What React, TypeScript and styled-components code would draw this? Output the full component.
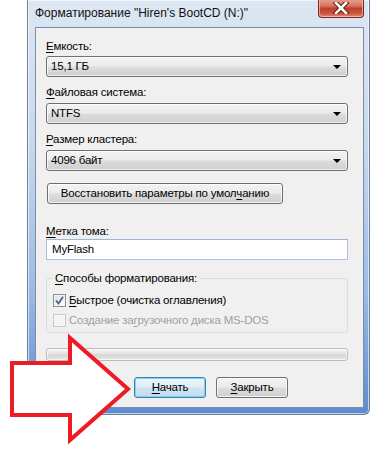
import React from 'react';
import styled, {createGlobalStyle, css} from 'styled-components';

const GlobalStyle = createGlobalStyle`
  body {
    margin: 0;
    background: #fff;
    font-family: "Liberation Sans", Arial, sans-serif;
  }
`;

const Stage = styled.div`
  position: relative;
  width: 374px;
  height: 454px;
  overflow: hidden;
  background: #fff;
`;

const Window = styled.div`
  margin-left: 27px;
  width: 343px;
  height: 415px;
  box-sizing: border-box;
  padding: 0 5px 0 7px;
  border: 1px solid #6f7f96;
  border-top: none;
  border-radius: 0 0 6px 6px;
  background: linear-gradient(
    180deg,
    #dde7f3 0%,
    #c7d8ee 35%,
    #9cbbe6 70%,
    #5d8bd0 100%
  );
  box-shadow: inset 0 0 0 1px rgba(255, 255, 255, 0.6);
  display: flex;
  flex-direction: column;
`;

const TitleBar = styled.div`
  height: 27px;
  display: flex;
  align-items: flex-start;
`;

const Title = styled.div`
  padding-top: 6px;
  font-size: 12px;
  line-height: 15px;
  color: #111;
  white-space: nowrap;
`;

const CloseButton = styled.div`
  margin-left: auto;
  margin-top: -2px;
  width: 46px;
  height: 20px;
  box-sizing: border-box;
  border: 1px solid #7a2b20;
  border-top: none;
  border-radius: 0 0 4px 4px;
  background: linear-gradient(
    180deg,
    #e9a999 0%,
    #d77764 40%,
    #c0402c 55%,
    #cc5440 80%,
    #e08a72 100%
  );
  box-shadow: inset 0 0 0 1px rgba(255, 220, 210, 0.55);
  display: flex;
  align-items: center;
  justify-content: center;
`;

const Client = styled.div`
  height: 381px;
  box-sizing: border-box;
  border: 1px solid #7d8ea6;
  background: #f0f0f0;
  padding: 11px 15px 0 10px;
  display: flex;
  flex-direction: column;
  font-size: 11.5px;
  letter-spacing: -0.2px;
  color: #000;
`;

const Label = styled.div<{$top: number}>`
  margin-top: ${p => p.$top}px;
  height: 15px;
  line-height: 15px;
  white-space: nowrap;
`;

const Key = styled.span`
  text-decoration: underline;
  text-underline-offset: 2px;
`;

const winGradient = css`
  background: linear-gradient(
    180deg,
    #f3f3f3 0%,
    #ebebeb 48%,
    #dddddd 52%,
    #cfcfcf 100%
  );
`;

const Combo = styled.div<{$top: number}>`
  margin-top: ${p => p.$top}px;
  height: 21px;
  box-sizing: border-box;
  border: 1px solid #707070;
  border-radius: 3px;
  ${winGradient};
  box-shadow: inset 0 0 0 1px rgba(255, 255, 255, 0.7);
  display: flex;
  align-items: center;
  padding: 0 6px 0 4px;
  line-height: 15px;
`;

const ComboValue = styled.span`
  flex: 1;
`;

const DropArrow = styled.span`
  width: 0;
  height: 0;
  border-left: 4px solid transparent;
  border-right: 4px solid transparent;
  border-top: 4px solid #000;
`;

const Button = styled.div<{$default?: boolean; $width: number}>`
  width: ${p => p.$width}px;
  height: 21px;
  box-sizing: border-box;
  border: 1px solid #707070;
  border-radius: 3px;
  ${winGradient};
  box-shadow: inset 0 0 0 1px rgba(255, 255, 255, 0.75);
  display: flex;
  align-items: center;
  justify-content: center;
  line-height: 15px;
  white-space: nowrap;
  ${p =>
    p.$default &&
    css`
      border-color: #3c7fb1;
      background: linear-gradient(
        180deg,
        #eaf4fb 0%,
        #e0eef8 48%,
        #cfe4f3 52%,
        #c2dcef 100%
      );
      box-shadow: inset 0 0 0 1px #7fd2f7;
    `}
`;

const RestoreButton = styled(Button)`
  margin-top: 12px;
  margin-left: 1px;
`;

const TextInput = styled.div`
  height: 21px;
  box-sizing: border-box;
  border: 1px solid #a9c3e0;
  border-top-color: #9fb6d0;
  background: #fff;
  display: flex;
  align-items: center;
  padding: 0 5px;
  line-height: 15px;
`;

const Group = styled.fieldset`
  margin: 11px 0 0;
  padding: 0 6px 2px;
  border: 1px solid #d5dfe5;
  border-radius: 3px;
  min-width: 0;
`;

const Legend = styled.legend`
  padding: 0 2px;
  line-height: 15px;
  height: 15px;
`;

const CheckRow = styled.div<{$disabled?: boolean; $first?: boolean}>`
  margin-top: ${p => (p.$first ? 4 : 0)}px;
  height: 20px;
  display: flex;
  align-items: center;
  gap: 3px;
  color: ${p => (p.$disabled ? '#a0a0a0' : '#000')};
  line-height: 15px;
`;

const Box = styled.span<{$disabled?: boolean}>`
  width: 13px;
  height: 13px;
  box-sizing: border-box;
  border: 1px solid ${p => (p.$disabled ? '#c8c8c8' : '#8e8f8f')};
  background: ${p =>
    p.$disabled
      ? '#f4f4f4'
      : 'linear-gradient(135deg, #dcdcdc 0%, #f4f4f4 60%, #ffffff 100%)'};
  box-shadow: inset 0 0 0 1px ${p => (p.$disabled ? '#f7f7f7' : '#f4f4f4')};
  display: flex;
  align-items: center;
  justify-content: center;
`;

const Progress = styled.div`
  margin-top: 15px;
  height: 13px;
  box-sizing: border-box;
  border: 1px solid #bcbcbc;
  border-radius: 3px;
  background: linear-gradient(180deg, #f6f6f6 0%, #e2e2e2 45%, #d6d6d6 55%, #e6e6e6 100%);
  box-shadow: inset 0 0 0 1px rgba(255, 255, 255, 0.6);
`;

const Footer = styled.div`
  margin-top: 16px;
  padding-left: 88px;
  display: flex;
  gap: 10px;
`;

const ArrowLayer = styled.svg`
  position: absolute;
  left: 0;
  top: 0;
  pointer-events: none;
`;

const CloseGlyph = () => (
  <svg width="16" height="12" viewBox="0 0 16 12">
    <path
      d="M3 1 L13 11 M13 1 L3 11"
      stroke="#5a1a12"
      strokeWidth="4.6"
      strokeLinecap="square"
    />
    <path
      d="M3 1 L13 11 M13 1 L3 11"
      stroke="#fff"
      strokeWidth="2.6"
      strokeLinecap="square"
    />
  </svg>
);

const CheckMark = () => (
  <svg width="9" height="9" viewBox="0 0 9 9">
    <path
      d="M1 4.5 L3.5 7.5 L8 0.8"
      fill="none"
      stroke="#4a5f97"
      strokeWidth="1.8"
    />
  </svg>
);

export default function App() {
  return (
    <Stage>
      <GlobalStyle />
      <Window>
        <TitleBar>
          <Title>Форматирование "Hiren's BootCD (N:)"</Title>
          <CloseButton>
            <CloseGlyph />
          </CloseButton>
        </TitleBar>
        <Client>
          <Label $top={0}>
            <Key>Е</Key>мкость:
          </Label>
          <Combo $top={2}>
            <ComboValue>15,1 ГБ</ComboValue>
            <DropArrow />
          </Combo>
          <Label $top={8}>
            <Key>Ф</Key>айловая система:
          </Label>
          <Combo $top={3}>
            <ComboValue>NTFS</ComboValue>
            <DropArrow />
          </Combo>
          <Label $top={8}>
            <Key>Р</Key>азмер кластера:
          </Label>
          <Combo $top={3}>
            <ComboValue>4096 байт</ComboValue>
            <DropArrow />
          </Combo>
          <RestoreButton $width={236}>
            Восстановить параметры по умол<Key>ч</Key>анию
          </RestoreButton>
          <Label $top={20}>
            <Key>М</Key>етка тома:
          </Label>
          <TextInput>MyFlash</TextInput>
          <Group>
            <Legend>
              <Key>С</Key>пособы форматирования:
            </Legend>
            <CheckRow $first>
              <Box>
                <CheckMark />
              </Box>
              <span>
                <Key>Б</Key>ыстрое (очистка оглавления)
              </span>
            </CheckRow>
            <CheckRow $disabled>
              <Box $disabled />
              <span>
                Создание за<Key>г</Key>рузочного диска MS-DOS
              </span>
            </CheckRow>
          </Group>
          <Progress />
          <Footer>
            <Button $default $width={72}>
              <span>
                <Key>Н</Key>ачать
              </span>
            </Button>
            <Button $width={72}>
              <span>
                <Key>З</Key>акрыть
              </span>
            </Button>
          </Footer>
        </Client>
      </Window>
      <ArrowLayer width="374" height="454" viewBox="0 0 374 454">
        <polygon
          points="12,363 70,363 70,338 128,389 70,440 70,415 12,415"
          fill="#fff"
          stroke="#ed1c24"
          strokeWidth="4"
          strokeLinejoin="miter"
        />
      </ArrowLayer>
    </Stage>
  );
}
